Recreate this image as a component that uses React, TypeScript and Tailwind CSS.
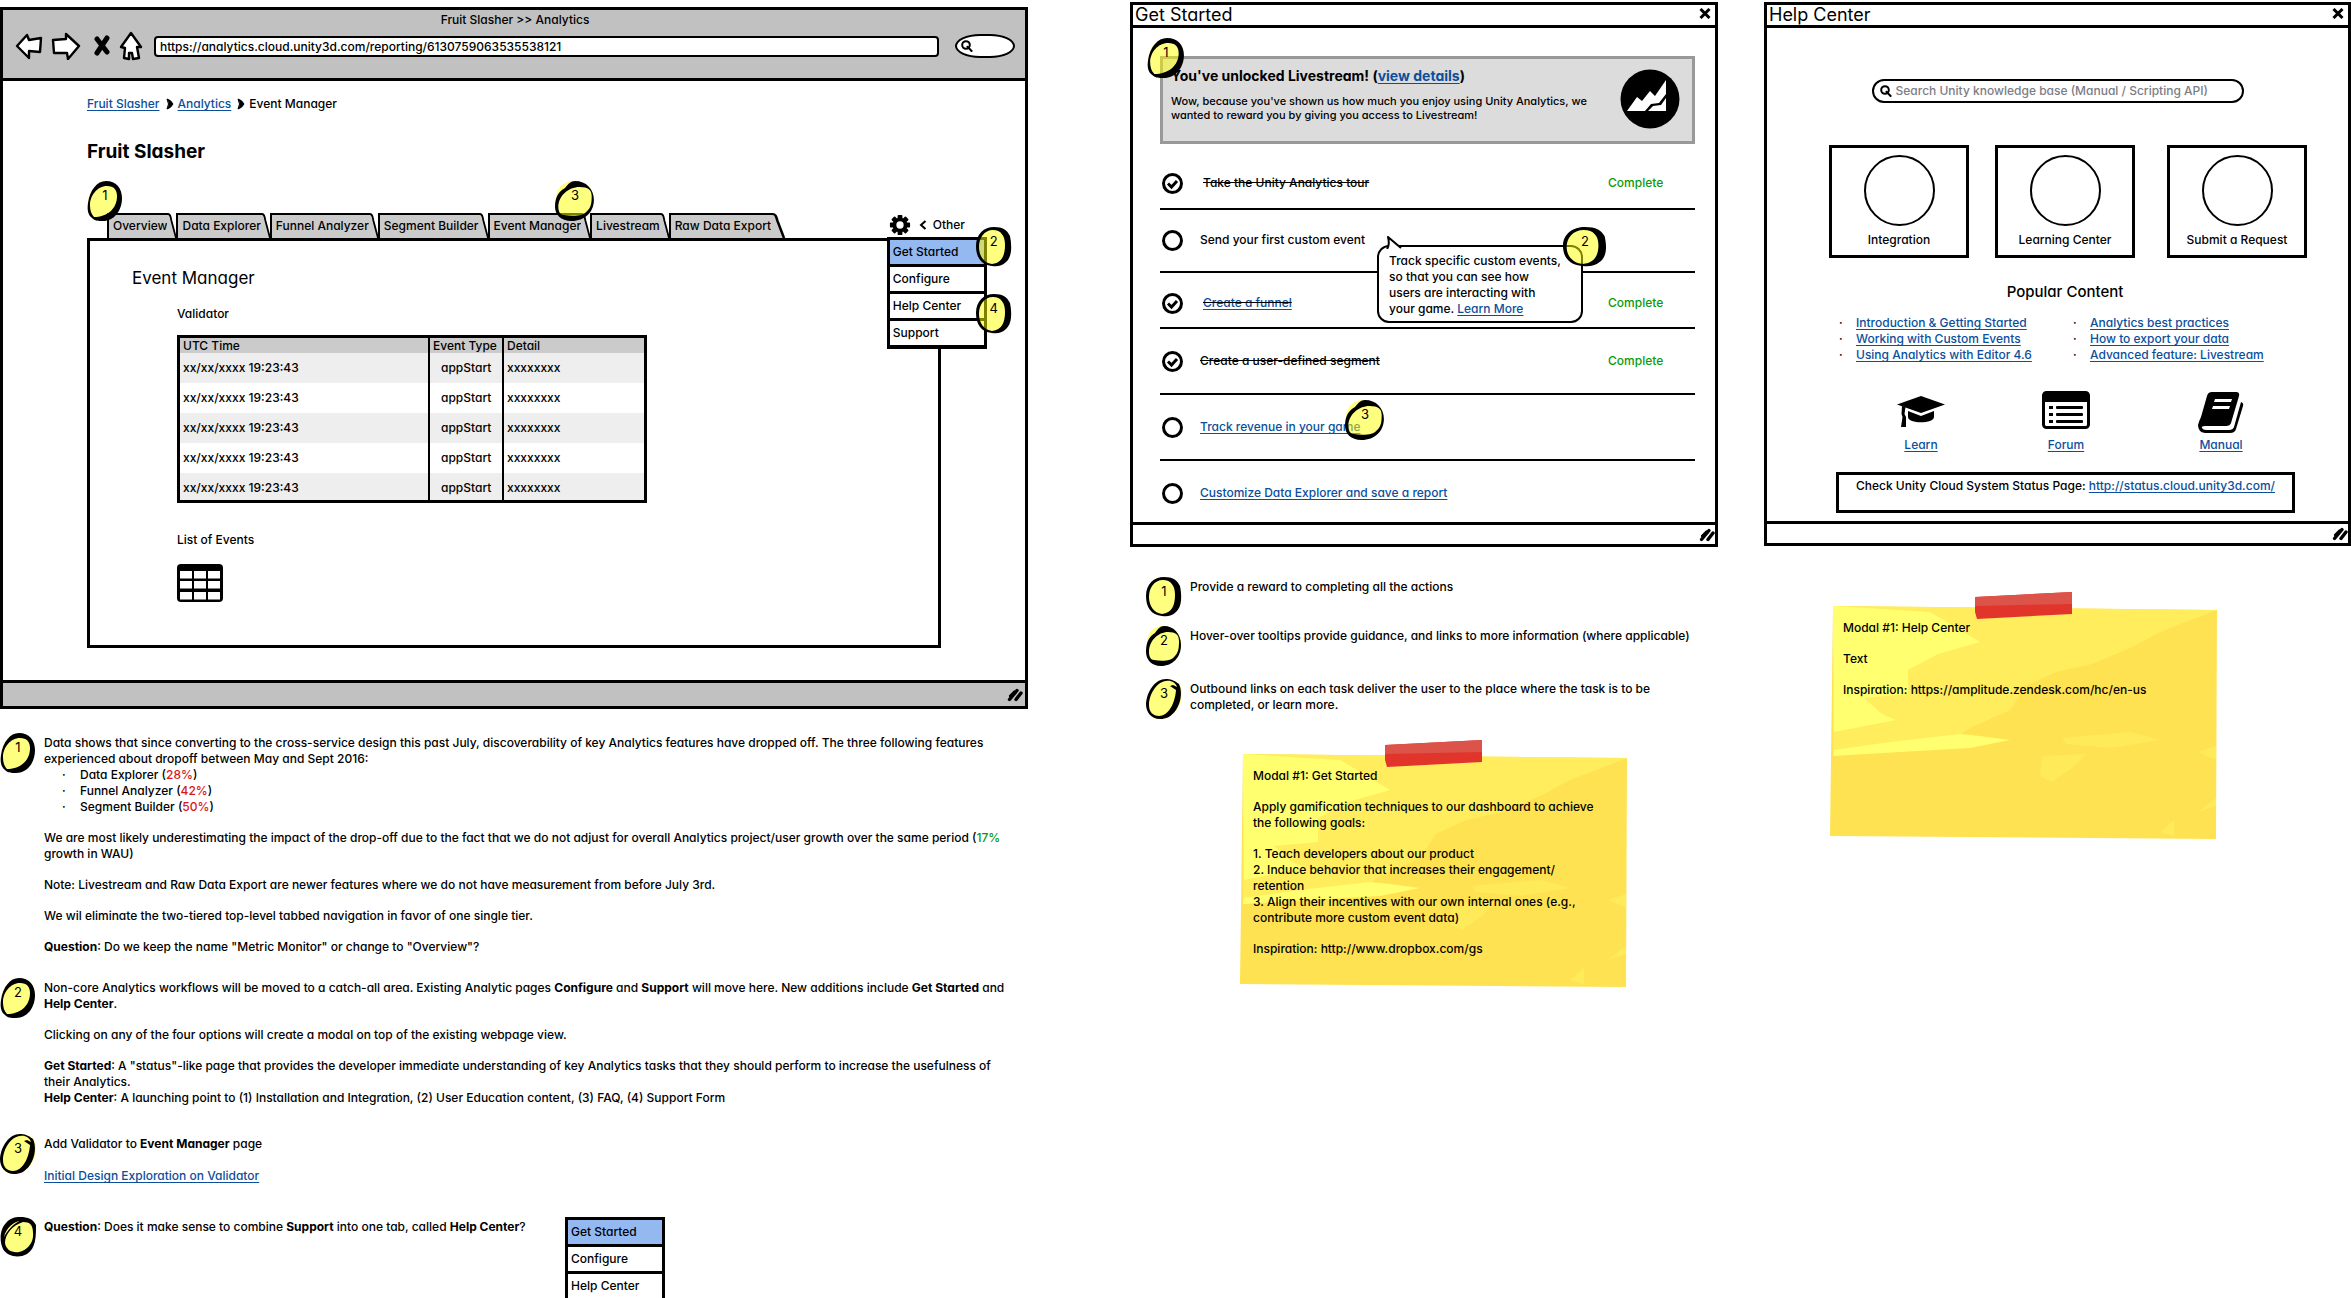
import React from "react";

type Shape = "lean" | "cap" | "oval" | "tall" | "swirl";

const INK: Record<Shape, { wash: string; ink: string }> = {
  lean: {
    wash: "M18 1C28 0 34 8 34 18C34 30 26 39 15 39C5 39 0 32 1 22C2 10 8 2 18 1Z",
    ink: "M19 0C29 0 35 7 35 17C35 30 27 40 16 40C11 40 8 40 5 37C1 34 0 29 1 22C3 9 10 0 19 0ZM20 5C10 5 3 15 3 24C3 29 4 33 7 36C20 36 30 28 30 15C30 9 27 5 20 5Z",
  },
  cap: {
    wash: "M15 0C27 0 35 7 35 18C35 29 28 38 17 38C6 38 1 31 1 21C0 10 5 1 15 0Z",
    ink: "M18 0C28 0 35 8 35 19C35 31 27 40 15 40C5 40 0 33 0 26C0 15 4 10 9 7C12 3 14 0 18 0ZM22 6C12 6 3 15 3 26C3 31 5 34 8 34C18 36 26 34 28 31C33 27 33 20 33 15C33 9 30 6 22 6Z",
  },
  oval: {
    wash: "M17 1C27 1 32 8 32 19C32 31 26 37 17 37C7 37 1 30 1 20C1 9 7 1 17 1Z",
    ink: "M18 0C27 0 31 3 34 9C36 19 36 30 30 35C26 39 21 40 16 39C5 38 0 30 0 19C0 7 8 0 18 0ZM17 3C8 3 3 11 3 20C3 29 8 36 16 37C26 36 29 28 29 18C29 9 25 3 17 3Z",
  },
  tall: {
    wash: "M20 0C30 0 36 5 36 14C36 28 26 40 14 40C5 40 0 34 1 25C2 11 9 1 20 0Z",
    ink: "M20 0C24 0 28 1 33 5C36 11 36 22 30 31C25 38 20 40 14 40C5 40 0 33 0 25C1 12 9 0 20 0ZM20 2C10 3 3 16 3 26C3 33 7 37 13 37C22 37 29 25 30 11L24 7L27 6L31 8C30 4 25 1 20 2Z",
  },
  swirl: {
    wash: "M18 1C29 0 35 6 35 18C35 30 27 38 17 38C6 38 1 31 1 20C1 10 7 2 18 1Z",
    ink: "M20 0C28 0 33 2 36 8C36 20 36 31 27 37C18 42 7 39 3 32C-1 24 0 12 6 6C10 1 15 0 20 0ZM21 4C14 4 6 11 4 20C7 14 14 6 20 4ZM23 5C13 8 5 17 5 26C6 33 12 36 19 35C27 33 34 26 33 16C33 8 30 5 23 5Z",
  },
};

function Bubble({ n, shape, className = "" }: { n: number; shape: Shape; className?: string }) {
  return (
    <span className={"block h-10 shrink-0 " + (className || "w-9")}>
      <span className="relative block h-full w-full">
        <svg viewBox="0 0 36 40" preserveAspectRatio="none" className="absolute inset-0 h-full w-full" aria-hidden="true">
          <path d={INK[shape].wash} fill="#ff0" fillOpacity=".5" />
          <path d={INK[shape].ink} fill="#000" fillRule="evenodd" />
        </svg>
        <span className="absolute inset-x-0 top-1.5 text-center text-[13px] leading-4 font-normal">{n}</span>
      </span>
    </span>
  );
}

function A({ children, className = "" }: { children: React.ReactNode; className?: string }) {
  return (
    <a href="#" className={"text-[#0b4f9c] underline underline-offset-2 [text-decoration-skip-ink:none] " + className}>
      {children}
    </a>
  );
}

function Grip() {
  return (
    <svg viewBox="0 0 16 14" className="h-[14px] w-4" aria-hidden="true">
      <g stroke="#000" strokeWidth="3.4" strokeLinecap="round">
        <path d="M2.5 11.5L10 2.5" />
        <path d="M3 8L7.5 3.5" strokeWidth="2.4" />
        <path d="M9 11.5L14 5" />
      </g>
    </svg>
  );
}

function Lens({ className = "" }: { className?: string }) {
  return (
    <svg viewBox="0 0 12 12" className={className} fill="none" stroke="#000" strokeWidth="2" strokeLinecap="round" aria-hidden="true">
      <circle cx="5" cy="5" r="3.8" />
      <path d="M6.5 6.8L10.6 11" />
    </svg>
  );
}

function OptionsMenu({ items, className = "" }: { items: string[]; className?: string }) {
  return (
    <ul className={"w-[100px] border-[3px] border-b-2 border-black bg-white " + className}>
      {items.map((t, i) => (
        <li key={t} className={i === 0 ? "border-b-[3px] border-black bg-[#94b9f1]" : i === items.length - 1 ? "border-b-2 border-black" : "border-b-[3px] border-black"}>
          <button type="button" className="block h-6 w-full pl-[3px] text-left">
            {t}
          </button>
        </li>
      ))}
    </ul>
  );
}

const tabs = ["Overview", "Data Explorer", "Funnel Analyzer", "Segment Builder", "Event Manager", "Livestream", "Raw Data Export"];

function Tab({ label }: { label: string }) {
  return (
    <button type="button" className="group relative flex h-[25px] whitespace-nowrap">
      <span className="block h-full border-t-2 border-l-2 border-black bg-[#cbcbcb] pt-[3px] pl-1">{label}</span>
      <svg viewBox="0 0 10 25" preserveAspectRatio="none" className="h-[25px] w-[9px] overflow-visible group-last:w-[13px]" aria-hidden="true">
        <path d="M0 0H1C4 0 4 4 5 8L10 25H0Z" fill="#cbcbcb" />
        <path d="M0 1H1C4 1 4 4 5 8L10 25" fill="none" stroke="#000" strokeWidth="2" />
      </svg>
    </button>
  );
}

function ToolbarIcons() {
  return (
    <div className="flex shrink-0 items-center">
      <button type="button" aria-label="Back">
        <svg viewBox="0 0 28 28" className="h-7 w-7" fill="#fff" stroke="#000" strokeWidth="2.4" strokeLinejoin="round">
          <path d="M2 14L12 3L14 8L26 6L25 20L14 19L14 26Z" />
        </svg>
      </button>
      <button type="button" aria-label="Forward" className="ml-2">
        <svg viewBox="0 0 30 28" className="h-7 w-[30px]" fill="#fff" stroke="#000" strokeWidth="2.4" strokeLinejoin="round">
          <path d="M2 8L15 7L15 2L28 14L17 27L16 21L3 21Z" />
        </svg>
      </button>
      <button type="button" aria-label="Stop" className="ml-3">
        <svg viewBox="0 0 18 22" className="h-[22px] w-[18px]" fill="none" stroke="#000" strokeWidth="5" strokeLinecap="round">
          <path d="M4 4L14 17M14 3L4 18" />
        </svg>
      </button>
      <button type="button" aria-label="Home" className="ml-2">
        <svg viewBox="0 0 24 30" className="h-[30px] w-6" fill="#fff" stroke="#000" strokeWidth="2.4" strokeLinejoin="round">
          <path d="M12 2L2 16L6 17L5 27L10 28L10 22L13 22L14 28L20 27L18 16L22 16Z" />
        </svg>
      </button>
    </div>
  );
}

function Crumb() {
  return (
    <svg viewBox="0 0 8 12" className="mr-1 ml-1.5 h-3 w-2" aria-hidden="true">
      <path d="M1 1Q5 2 7 6Q5 10 1 11Q4 6 1 1Z" stroke="#000" strokeWidth="1" />
    </svg>
  );
}

function Gear() {
  return (
    <svg viewBox="-12 -12 24 24" className="h-[22px] w-[22px]" aria-hidden="true">
      {[0, 45, 90, 135].map((r) => (
        <rect key={r} x="-2.6" y="-11" width="5.2" height="22" rx="1" transform={"rotate(" + r + ")"} />
      ))}
      <circle r="8" />
      <circle r="4" fill="#fff" />
    </svg>
  );
}

function EventTable() {
  return (
    <table className="w-[470px] table-fixed border-collapse bg-white text-left outline-[3px] -outline-offset-[3px] outline-black">
      <thead>
        <tr className="h-[18px] bg-[#cbcbcb]">
          <th className="w-[252px] border-r-2 border-black pt-[3px] pl-1.5 leading-[15px] font-medium">UTC Time</th>
          <th className="w-[74px] border-r-2 border-black pt-[3px] pl-[3px] leading-[15px] font-medium whitespace-nowrap">Event Type</th>
          <th className="pt-[3px] pl-[3px] leading-[15px] font-medium">Detail</th>
        </tr>
      </thead>
      <tbody>
        {[0, 1, 2, 3, 4].map((i) => (
          <tr key={i} className="h-[30px] odd:bg-[#eee]">
            <td className="border-r-2 border-black pl-1.5">xx/xx/xxxx 19:23:43</td>
            <td className="border-r-2 border-black pl-[11px]">appStart</td>
            <td className="pl-[3px]">xxxxxxxx</td>
          </tr>
        ))}
      </tbody>
    </table>
  );
}

function Browser() {
  return (
    <section className="mt-[7px] border-[3px] border-black">
      <header className="border-b-[3px] border-black bg-[#c1c1c1] pr-2.5 pb-4 pl-3 pt-0.5">
        <p className="text-center">Fruit Slasher &gt;&gt; Analytics</p>
        <div className="mt-0.5 flex h-8 items-center">
          <ToolbarIcons />
          <input
            aria-label="Address"
            defaultValue="https://analytics.cloud.unity3d.com/reporting/6130759063535538121"
            className="ml-[11px] h-[21px] min-w-0 flex-1 rounded-sm border-2 border-black bg-white px-1 outline-none"
          />
          <label className="ml-4 flex h-6 w-[60px] items-center rounded-[50%/60%] border-2 border-black bg-white pl-1">
            <Lens className="h-3 w-3 shrink-0" />
            <input aria-label="Search" className="w-full min-w-0 outline-none" />
          </label>
        </div>
      </header>

      <div className="pt-[15px] pr-[60px] pb-8 pl-[84px]">
        <nav className="flex items-center" aria-label="Breadcrumb">
          <A>Fruit Slasher</A>
          <Crumb />
          <A>Analytics</A>
          <Crumb />
          <span>Event Manager</span>
        </nav>
        <h1 className="mt-7 text-[19px] leading-6 font-bold">Fruit Slasher</h1>

        <div className="relative mt-12 flex items-end justify-between">
          <div className="ml-5 flex">
            {tabs.map((t) => (
              <Tab key={t} label={t} />
            ))}
          </div>
          <div className="relative flex h-[26px] items-center">
            <Gear />
            <svg viewBox="0 0 8 10" className="ml-2 h-2.5 w-2" fill="none" stroke="#000" strokeWidth="2" aria-hidden="true">
              <path d="M6.500 1L2 5L6.500 9" />
            </svg>
            <span className="ml-1.5">Other</span>
            <div className="absolute top-[25px] -left-0.5 z-10">
              <OptionsMenu items={["Get Started", "Configure", "Help Center", "Support"]} />
              <Bubble n={2} shape="oval" className="absolute -top-2.5 left-[89px] w-9" />
              <Bubble n={4} shape="oval" className="absolute top-[57px] left-[89px] w-9" />
            </div>
          </div>
          <Bubble n={1} shape="lean" className="absolute -top-[31px] left-0 w-9" />
          <Bubble n={3} shape="cap" className="absolute -top-[31px] left-[468px] w-10" />
        </div>

        <div className="mr-6 border-[3px] border-black pt-[25px] pb-[43px] pl-[42px]">
          <h2 className="text-[17px] leading-6 font-normal">Event Manager</h2>
          <div className="ml-[45px]">
            <p className="mt-4">Validator</p>
            <div className="mt-[13px]">
              <EventTable />
            </div>
            <p className="mt-[29px]">List of Events</p>
            <svg viewBox="0 0 46 38" className="mt-4 h-[38px] w-[46px]" aria-hidden="true">
              <rect width="46" height="38" rx="4" />
              <g fill="#fff">
                {[7, 17, 28].map((y) =>
                  [3, 17, 31].map((x) => <rect key={x + "-" + y} x={x} y={y} width="12" height="7.500" />)
                )}
              </g>
            </svg>
          </div>
        </div>
      </div>

      <footer className="flex h-[26px] items-center justify-end border-t-[3px] border-black bg-[#c1c1c1] pr-0.5">
        <Grip />
      </footer>
    </section>
  );
}

function Notes() {
  return (
    <ol className="pt-6">
      <li className="flex">
        <Bubble n={1} shape="lean" />
        <div className="flex flex-col gap-[15px] pt-0.5 pl-2">
          <div>
            <p>
              Data shows that since converting to the cross-service design this past July, discoverability of key Analytics features have dropped off. The three following features
              <br />
              experienced about dropoff between May and Sept 2016:
            </p>
            <ul>
              {[["Data Explorer", "28%"], ["Funnel Analyzer", "42%"], ["Segment Builder", "50%"]].map(([name, drop]) => (
                <li key={name} className="flex">
                  <span className="w-9 pl-[18px]">·</span>
                  <span>
                    {name} (<span className="text-[#d8161b]">{drop}</span>)
                  </span>
                </li>
              ))}
            </ul>
          </div>
          <p>
            We are most likely underestimating the impact of the drop-off due to the fact that we do not adjust for overall Analytics project/user growth over the same period (<span className="text-[#0c9a0c]">17%</span>
            <br />
            growth in WAU)
          </p>
          <p>Note: Livestream and Raw Data Export are newer features where we do not have measurement from before July 3rd.</p>
          <p>We wil eliminate the two-tiered top-level tabbed navigation in favor of one single tier.</p>
          <p>
            <b>Question</b>: Do we keep the name "Metric Monitor" or change to "Overview"?
          </p>
        </div>
      </li>
      <li className="mt-[23px] flex">
        <Bubble n={2} shape="lean" />
        <div className="flex flex-col gap-[15px] pt-0.5 pl-2">
          <p>
            Non-core Analytics workflows will be moved to a catch-all area. Existing Analytic pages <b>Configure</b> and <b>Support</b> will move here. New additions include <b>Get Started</b> and
            <br />
            <b>Help Center</b>.
          </p>
          <p>Clicking on any of the four options will create a modal on top of the existing webpage view.</p>
          <p>
            <b>Get Started</b>: A "status"-like page that provides the developer immediate understanding of key Analytics tasks that they should perform to increase the usefulness of
            <br />
            their Analytics.
            <br />
            <b>Help Center</b>: A launching point to (1) Installation and Integration, (2) User Education content, (3) FAQ, (4) Support Form
          </p>
        </div>
      </li>
      <li className="mt-7 flex">
        <Bubble n={3} shape="tall" />
        <div className="flex flex-col gap-4 pt-0.5 pl-2">
          <p>
            Add Validator to <b>Event Manager</b> page
          </p>
          <p>
            <A>Initial Design Exploration on Validator</A>
          </p>
        </div>
      </li>
      <li className="mt-[33px] flex">
        <Bubble n={4} shape="swirl" />
        <p className="w-[529px] pt-0.5 pl-2">
          <b>Question</b>: Does it make sense to combine <b>Support</b> into one tab, called <b>Help Center</b>?
        </p>
        <OptionsMenu items={["Get Started", "Configure", "Help Center"]} className="self-start" />
      </li>
    </ol>
  );
}

function Modal({ title, children }: { title: string; children: React.ReactNode }) {
  return (
    <section className="mt-0.5 border-[3px] border-black">
      <header className="flex h-[23px] items-center justify-between border-b-[3px] border-black pr-1 pl-0.5">
        <h2 className="text-lg leading-5 font-normal">{title}</h2>
        <button type="button" aria-label="Close" className="-mt-1">
          <svg viewBox="0 0 12 11" className="h-[11px] w-3" stroke="#000" strokeWidth="3" aria-hidden="true">
            <path d="M1.500 1L10.500 10M10.500 1L1.500 10" />
          </svg>
        </button>
      </header>
      {children}
      <footer className="flex h-[22px] items-center justify-end border-t-[3px] border-black">
        <Grip />
      </footer>
    </section>
  );
}

type Task = { label: string; done: boolean; link: boolean; pad: string };

const tasks: Task[] = [
  { label: "Take the Unity Analytics tour", done: true, link: false, pad: "pt-7 pb-[14px]" },
  { label: "Send your first custom event", done: false, link: false, pad: "pt-[19px] pb-5" },
  { label: "Create a funnel", done: true, link: true, pad: "pt-[19px] pb-[13px]" },
  { label: "Create a user-defined segment", done: true, link: false, pad: "pt-[21px] pb-[21px]" },
  { label: "Track revenue in your game", done: false, link: true, pad: "pt-[21px] pb-[21px]" },
  { label: "Customize Data Explorer and save a report", done: false, link: true, pad: "pt-[21px] pb-[18px]" },
];

function Tooltip() {
  return (
    <div className="absolute top-4 left-[217px] z-10 w-[206px] rounded-xl border-2 border-black bg-white pt-1.5 pb-1 pl-2.5">
      Track specific custom events,
      <br />
      so that you can see how
      <br />
      users are interacting with
      <br />
      your game. <A>Learn More</A>
      <svg viewBox="0 0 16 13" className="absolute -top-[11px] left-[7px] h-[13px] w-4" aria-hidden="true">
        <path d="M3 13L2 1L15 12Z" fill="#fff" />
        <path d="M1 13Q4 9 2 1L15 12" fill="none" stroke="#000" strokeWidth="2" strokeLinejoin="round" />
      </svg>
      <Bubble n={2} shape="oval" className="absolute -top-5 left-[184px] w-11" />
    </div>
  );
}

function TaskRow({ task, index }: { task: Task; index: number }) {
  const strike = task.done ? "line-through" : "";
  return (
    <li className={"border-b-2 border-black last:border-b-0 " + task.pad}>
      <div className="relative flex h-[22px] items-center">
        <span className="relative ml-0.5 block h-[21px] w-[21px] shrink-0">
          <input
            id={"task-" + index}
            type="checkbox"
            defaultChecked={task.done}
            className="peer block h-[21px] w-[21px] appearance-none rounded-full border-[3px] border-black bg-white"
          />
          <svg viewBox="0 0 21 21" className="pointer-events-none absolute inset-0 hidden h-full w-full peer-checked:block" aria-hidden="true">
            <path d="M6 10.500L9.500 14L15 8" fill="none" stroke="#000" strokeWidth="3" />
          </svg>
        </span>
        <label htmlFor={"task-" + index} className={(index % 2 === 0 && task.done ? "ml-5 " : "ml-[17px] ") + strike}>
          {task.link ? <A className={task.done ? "[text-decoration-line:underline_line-through]" : ""}>{task.label}</A> : task.label}
        </label>
        {task.done && <span className="ml-auto w-[87px] text-[#0c9a0c]">Complete</span>}
        {index === 1 && <Tooltip />}
        {index === 4 && <Bubble n={3} shape="cap" className="absolute -top-4 left-[185px] w-10" />}
      </div>
    </li>
  );
}

function GetStarted() {
  return (
    <Modal title="Get Started">
      <div className="pt-7 pr-5 pl-[27px]">
        <div className="relative flex h-[88px] border-[3px] border-[#999] bg-[#dcdcdc] pt-[7px] pl-2">
          <div className="flex-1">
            <h3 className="text-sm leading-5 font-bold">
              You've unlocked Livestream! (<A>view details</A>)
            </h3>
            <p className="mt-2 text-[11px] leading-[14px]">
              Wow, because you've shown us how much you enjoy using Unity Analytics, we
              <br />
              wanted to reward you by giving you access to Livestream!
            </p>
          </div>
          <svg viewBox="0 0 60 60" className="mt-[3px] mr-3 h-[60px] w-[60px]" aria-hidden="true">
            <circle cx="30" cy="30" r="29.500" />
            <path d="M7 42L17 28L22 32L30 22L35 27L46 11V25L39 34L31 35L25 42Z" fill="#fff" />
            <path d="M28 42L33 37L41 36L46 29V42Z" fill="#fff" />
          </svg>
          <Bubble n={1} shape="lean" className="absolute -top-[21px] -left-4 w-[38px]" />
        </div>
        <ul>
          {tasks.map((t, i) => (
            <TaskRow key={t.label} task={t} index={i} />
          ))}
        </ul>
      </div>
    </Modal>
  );
}

function Sticky({ children, className = "" }: { children: React.ReactNode; className?: string }) {
  return (
    <aside className={"relative h-[234px] w-[388px] " + className}>
      <svg viewBox="0 0 388 234" preserveAspectRatio="none" className="absolute inset-0 h-full w-full" aria-hidden="true">
        <path d="M3 0L387 4L386 233L0 230Z" fill="#ffe252" />
        <path d="M3 0L387 4L366 12L330 26L300 42L262 58L226 66L196 80L180 104L140 122L120 136L3 150Z" fill="#ffed5e" />
        <path d="M3 0L100 6L150 36L108 48L78 64L78 88L34 92L52 108L66 114L4 126Z" fill="#ffff70" />
        <path d="M3 150L4 144L60 136L130 128L150 130L180 134L140 142L70 146Z" fill="#ffff70" />
        <path d="M212 150L256 148L242 162L222 176L210 170ZM232 132L300 126L330 134L280 142L236 138ZM368 146L386 140V154ZM330 226L344 214V230ZM368 206L386 192V200Z" fill="#ffea5a" />
      </svg>
      <svg viewBox="0 0 98 27" className="absolute -top-[14px] left-[145px] h-[27px] w-[98px]" aria-hidden="true">
        <path d="M0 5L97 0V22L2 27L0 20Z" fill="#e1352b" />
        <path d="M0 5L97 0V12L0 14Z" fill="#dc5349" />
      </svg>
      <div className="relative pt-[14px] pl-[13px]">{children}</div>
    </aside>
  );
}

function Callout({ n, shape, children, className = "" }: { n: number; shape: Shape; children: React.ReactNode; className?: string }) {
  return (
    <li className={"flex " + className}>
      <Bubble n={n} shape={shape} />
      <p className="pt-0.5 pl-2">{children}</p>
    </li>
  );
}

function Dots({ items, className = "" }: { items: string[]; className?: string }) {
  return (
    <ul className={className}>
      {items.map((t) => (
        <li key={t} className="flex whitespace-nowrap">
          <span className="w-[17px]">·</span>
          <A>{t}</A>
        </li>
      ))}
    </ul>
  );
}

function CapIcon() {
  return (
    <svg viewBox="0 0 48 40" className="h-10 w-12" aria-hidden="true">
      <path d="M24 5L48 13.500L24 22L0 13.500Z" />
      <path d="M11 20L24 25L37 20V26C37 33 11 33 11 26Z" />
      <path d="M5 15L8.500 16L7.500 23L9 26L9 36H4L5.500 26L4.500 23Z" />
    </svg>
  );
}

function ForumIcon() {
  return (
    <svg viewBox="0 0 48 40" className="h-10 w-12" aria-hidden="true">
      <rect x="1.500" y="1.500" width="45" height="35" rx="3" fill="#fff" stroke="#000" strokeWidth="3" />
      <path d="M1 2H47V11H1Z" />
      {[16, 23, 30].map((y) => (
        <g key={y}>
          <rect x="7" y={y - 1} width="4" height="3" />
          <rect x="14" y={y - 1} width="27" height="3" rx="1" />
        </g>
      ))}
    </svg>
  );
}

function BookIcon() {
  return (
    <svg viewBox="0 0 46 42" className="h-[42px] w-[46px]" aria-hidden="true">
      <path d="M14 1H38Q42 1 41 5L33 32Q32 35 28 35H7Q3 35 4 37Q5 39 8 39H31Q35 39 36 36L43 11Q46 12 45 15L38 38Q37 42 32 42H7Q0 41 0 34Q1 30 3 26L9 5Q10 1 14 1Z" />
      <path d="M17 8H34L33 11H16ZM15 15H32L31 18H14Z" fill="#fff" />
    </svg>
  );
}

const resources = [
  { label: "Learn", icon: <CapIcon /> },
  { label: "Forum", icon: <ForumIcon /> },
  { label: "Manual", icon: <BookIcon /> },
];

function HelpCenter() {
  return (
    <Modal title="Help Center">
      <div className="pt-[51px] pb-2">
        <label className="mx-auto flex h-6 w-[372px] items-center rounded-full border-2 border-black pl-1.5">
          <Lens className="h-3 w-3 shrink-0" />
          <input aria-label="Search knowledge base" placeholder="Search Unity knowledge base (Manual / Scripting API)" className="ml-1 w-full min-w-0 outline-none placeholder:text-[#7c7c84]" />
        </label>

        <div className="mt-[42px] flex pl-[62px]">
          {["Integration", "Learning Center", "Submit a Request"].map((t) => (
            <button key={t} type="button" className="mr-[26px] flex h-[113px] w-[140px] flex-col items-center border-[3px] border-black pt-[7px] last:mr-0 last:ml-1.5">
              <span className="block h-[71px] w-[71px] rounded-full border-2 border-black" />
              <span className="mt-1.5">{t}</span>
            </button>
          ))}
        </div>

        <h3 className="mt-6 ml-[15px] text-center text-[15px] leading-5">Popular Content</h3>
        <div className="mt-[13px] flex pl-[72px]">
          <Dots items={["Introduction & Getting Started", "Working with Custom Events", "Using Analytics with Editor 4.6"]} className="w-[234px]" />
          <Dots items={["Analytics best practices", "How to export your data", "Advanced feature: Livestream"]} />
        </div>

        <ul className="mt-7 flex gap-[97px] pl-[130px]">
          {resources.map((r) => (
            <li key={r.label} className="flex h-[62px] w-12 flex-col items-center justify-between last:ml-2.5">
              {r.icon}
              <A>{r.label}</A>
            </li>
          ))}
        </ul>

        <div className="mt-[19px] mr-[53px] ml-[69px] h-[41px] border-[3px] border-black pt-[3px] text-center">
          Check Unity Cloud System Status Page: <A>http://status.cloud.unity3d.com/</A>
        </div>
      </div>
    </Modal>
  );
}

export default function App() {
  return (
    <main className="grid min-h-screen grid-cols-[1130fr_634fr_587fr] items-start overflow-hidden bg-white font-[Inter,sans-serif] text-xs leading-4 font-medium text-black [font-feature-settings:'cv11']">
      <div className="pr-[102px] whitespace-nowrap">
        <Browser />
        <Notes />
      </div>
      <div className="pr-[46px] whitespace-nowrap">
        <GetStarted />
        <ol className="pt-[30px] pl-4">
          <Callout n={1} shape="oval">Provide a reward to completing all the actions</Callout>
          <Callout n={2} shape="cap" className="mt-[9px]">Hover-over tooltips provide guidance, and links to more information (where applicable)</Callout>
          <Callout n={3} shape="tall" className="mt-[13px]">
            Outbound links on each task deliver the user to the place where the task is to be
            <br />
            completed, or learn more.
          </Callout>
        </ol>
        <Sticky className="mt-[35px] ml-[110px]">
          <p>Modal #1: Get Started</p>
          <p className="mt-[15px]">
            Apply gamification techniques to our dashboard to achieve
            <br />
            the following goals:
          </p>
          <ol className="mt-[15px]">
            <li>1. Teach developers about our product</li>
            <li>
              2. Induce behavior that increases their engagement/
              <br />
              retention
            </li>
            <li>
              3. Align their incentives with our own internal ones (e.g.,
              <br />
              contribute more custom event data)
            </li>
          </ol>
          <p className="mt-[15px]">Inspiration: http://www.dropbox.com/gs</p>
        </Sticky>
      </div>
      <div className="whitespace-nowrap">
        <HelpCenter />
        <Sticky className="mt-[60px] ml-[66px]">
          <p>Modal #1: Help Center</p>
          <p className="mt-[15px]">Text</p>
          <p className="mt-[15px]">Inspiration: https://amplitude.zendesk.com/hc/en-us</p>
        </Sticky>
      </div>
    </main>
  );
}
